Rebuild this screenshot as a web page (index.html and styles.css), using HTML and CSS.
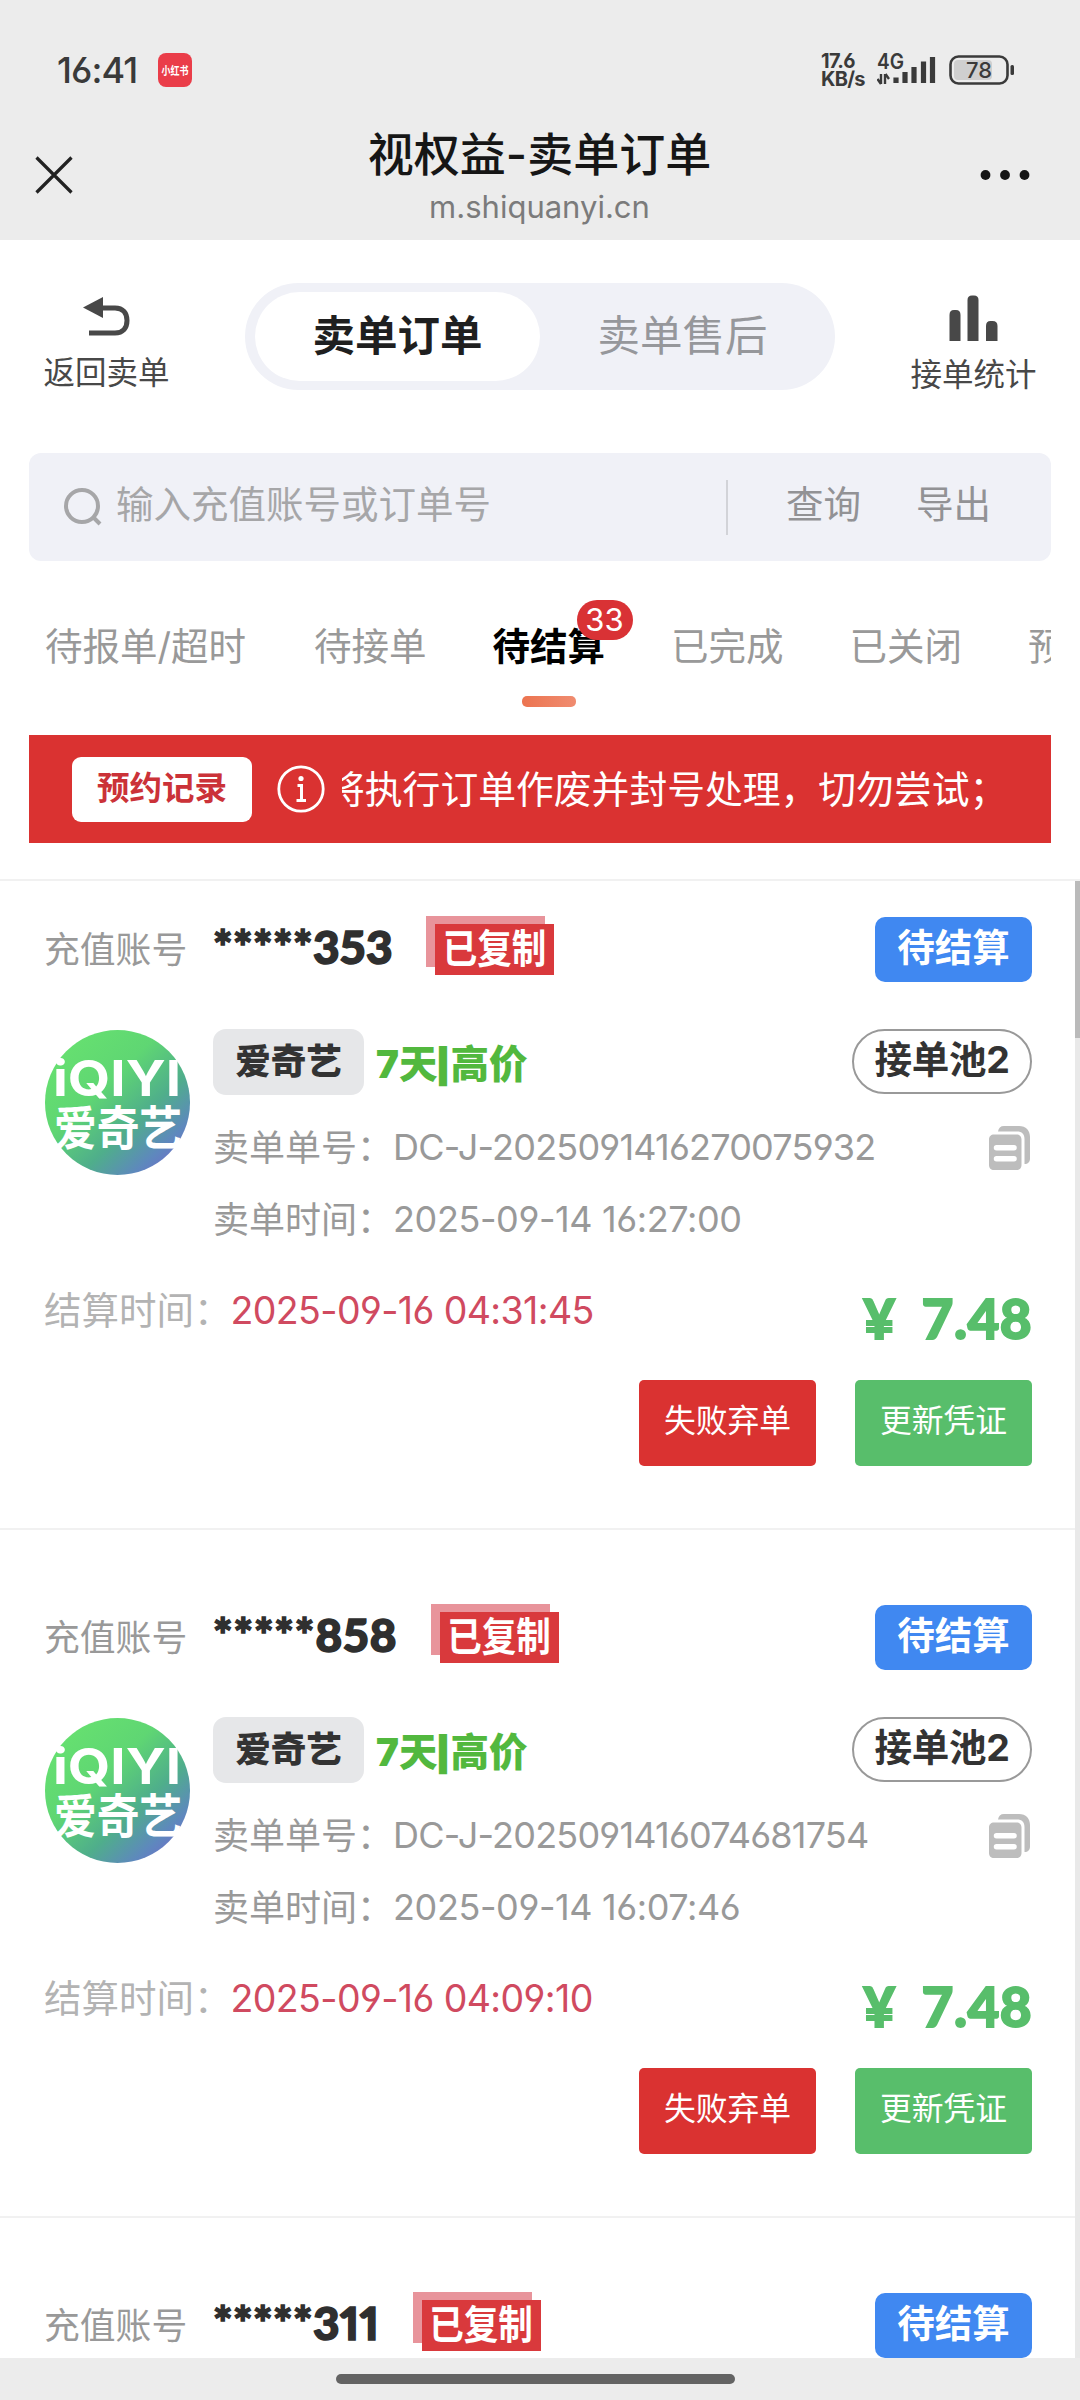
FILE: index.html
```html
<!DOCTYPE html>
<html lang="zh-CN">
<head>
<meta charset="utf-8">
<title>视权益-卖单订单</title>
<link rel="stylesheet" href="styles.css">
</head>
<body>
<svg class="defs" width="0" height="0" aria-hidden="true">
  <defs>
    <linearGradient id="logo-bg" x1="0.15" y1="0.1" x2="0.9" y2="0.9">
      <stop offset="0" stop-color="#66e070"/>
      <stop offset="0.35" stop-color="#5fd673"/>
      <stop offset="0.65" stop-color="#4fae8b"/>
      <stop offset="0.88" stop-color="#5e88bd"/>
      <stop offset="1" stop-color="#6c72c8"/>
    </linearGradient>
    <symbol id="logo" viewBox="0 0 145 145">
      <circle cx="72.5" cy="72.5" r="72.5" fill="url(#logo-bg)"/>
      <text class="logo-en" x="8" y="66" textLength="128" lengthAdjust="spacingAndGlyphs">iQIYI</text>
      <text class="logo-cn" x="9" y="115" textLength="128" lengthAdjust="spacingAndGlyphs">爱奇艺</text>
    </symbol>
    <symbol id="copy" viewBox="0 0 41 44">
      <path d="M9 5.5C9.500 2 11.500 0 15 0H30C37 0 41 4.500 41 11V32.500C41 36 39 38 35.500 38V13C35.500 8 33 5.500 28 5.500Z" fill="#bdbdbd"/>
      <path fill-rule="evenodd" d="M5 8.500H27.500C30.500 8.500 32.500 10.500 32.500 13.500V39C32.500 42 30.500 44 27.500 44H5C2 44 0 42 0 39V13.500C0 10.500 2 8.500 5 8.500ZM7.500 19A2.700 2.700 0 0 0 7.500 24.500H25A2.700 2.700 0 0 0 25 19ZM7.500 30A2.700 2.700 0 0 0 7.500 35.500H25A2.700 2.700 0 0 0 25 30Z" fill="#bdbdbd"/>
    </symbol>
  </defs>
</svg>
<div class="screen">
  <header class="header">
    <div class="status">
      <span class="time">16:41</span>
      <svg class="app-icon" width="34" height="34" viewBox="0 0 34 34"><rect width="34" height="34" rx="8" fill="#ea3d49"/><text transform="translate(3.500 21.500) scale(1 1.300)" textLength="27" lengthAdjust="spacingAndGlyphs">小红书</text></svg>
      <span class="speed"><span>17.6</span><span>KB/s</span></span>
      <svg class="signal" width="60" height="34" viewBox="0 0 60 34">
        <text x="0" y="15.500" textLength="27" lengthAdjust="spacingAndGlyphs">4G</text>
        <path d="M4 21V31M0.500 26L4 31M8 31V21M12 26L8.500 21" fill="none" stroke="#3a3a3a" stroke-width="2.400"/>
        <path d="M19 30V24.500M28 30V19M37 30V14M46.500 30V8.500M55.500 30V4" stroke="#3a3a3a" stroke-width="5.200"/>
      </svg>
      <svg class="battery" width="66" height="30" viewBox="0 0 66 30">
        <rect x="5" y="5" width="38" height="20" rx="4" fill="#cfcfcf"/>
        <rect x="1.500" y="1.500" width="57" height="27" rx="8" fill="none" stroke="#3a3a3a" stroke-width="2.600"/>
        <rect x="61.500" y="10" width="3.500" height="10" rx="1.500" fill="#3a3a3a"/>
        <text x="17" y="23" textLength="26" lengthAdjust="spacingAndGlyphs">78</text>
      </svg>
    </div>
    <div class="nav">
      <svg class="close" width="38" height="38" viewBox="0 0 38 38"><path d="M1.500 1.500L36.500 36.500M36.500 1.500L1.500 36.500" stroke="#222" stroke-width="3.200"/></svg>
      <div class="nav-title"><h1>视权益-卖单订单</h1><p>m.shiquanyi.cn</p></div>
      <svg class="dots" width="50" height="12" viewBox="0 0 50 12" fill="#161616"><circle cx="5.500" cy="6" r="4.900"/><circle cx="25" cy="6" r="4.900"/><circle cx="44.500" cy="6" r="4.900"/></svg>
    </div>
  </header>

  <div class="topbar">
    <div class="action back">
      <svg width="48" height="40" viewBox="0 0 48 40"><path d="M0 10.500L20 0V21Z" fill="#484848"/><path d="M18 11H32C40 11 44 16 44 23.500C44 31 40 36 32 36H6" fill="none" stroke="#484848" stroke-width="5"/></svg>
      <span>返回卖单</span>
    </div>
    <div class="segment">
      <span class="segment-item on">卖单订单</span>
      <span class="segment-item">卖单售后</span>
    </div>
    <div class="action stats">
      <svg width="50" height="46" viewBox="0 0 50 46" fill="#484848"><path d="M0.500 46V20Q0.500 15 5 15H7Q11.500 15 11.500 20V46ZM18.500 46V5Q18.500 0.500 23 0.500H25Q29.500 0.500 29.500 5V46ZM37 46V31Q37 26 41.500 26H43.500Q48.500 26 48.500 31V46Z"/></svg>
      <span>接单统计</span>
    </div>
  </div>

  <div class="search">
    <svg width="38" height="38" viewBox="0 0 38 38" fill="none" stroke="#a6a6a8" stroke-width="4"><circle cx="18" cy="18" r="16"/><path d="M29.500 29.500L36 36"/></svg>
    <span class="placeholder">输入充值账号或订单号</span>
    <i class="divider"></i>
    <span class="link">查询</span>
    <span class="link">导出</span>
  </div>

  <nav class="tabs">
    <span class="tab">待报单/超时</span>
    <span class="tab">待接单</span>
    <span class="tab active">待结算<b class="count">33</b></span>
    <span class="tab">已完成</span>
    <span class="tab">已关闭</span>
    <span class="tab">预</span>
  </nav>

  <div class="notice">
    <span class="notice-btn">预约记录</span>
    <svg width="48" height="50" viewBox="0 0 48 50" fill="none" stroke="#fff"><circle cx="24" cy="25" r="22.200" stroke-width="2.800"/><circle cx="24" cy="14.500" r="2.600" fill="#fff" stroke="none"/><path d="M20.500 21.500H24.500V36.500M19.500 36.500H29" stroke-width="3"/></svg>
    <div class="marquee"><span>将执行订单作废并封号处理，切勿尝试；</span></div>
  </div>

  <main class="list">
    <article class="card first">
      <div class="account">
        <span class="label">充值账号</span><span class="number">*****353</span><span class="copied"><em><span>已复制</span></em></span>
        <span class="state">待结算</span>
      </div>
      <div class="main">
        <svg class="logo" width="145" height="145"><use href="#logo"/></svg>
        <div class="info">
          <div class="product"><span class="brand">爱奇艺</span><span class="plan">7天<i>|</i>高价</span><span class="pool">接单池2</span></div>
          <div class="line"><span class="key">卖单单号：</span><span class="val id">DC-J-2025091416270075932</span><svg class="copy" width="41" height="44"><use href="#copy"/></svg></div>
          <div class="line"><span class="key">卖单时间：</span><span class="val">2025-09-14 16:27:00</span></div>
        </div>
      </div>
      <div class="settle"><span class="settle-label">结算时间：</span><span class="settle-time">2025-09-16 04:31:45</span><span class="price"><span>¥</span>7.48</span></div>
      <div class="buttons"><span class="btn fail">失败弃单</span><span class="btn update">更新凭证</span></div>
    </article>

    <article class="card">
      <div class="account">
        <span class="label">充值账号</span><span class="number wide">*****858</span><span class="copied"><em><span>已复制</span></em></span>
        <span class="state">待结算</span>
      </div>
      <div class="main">
        <svg class="logo" width="145" height="145"><use href="#logo"/></svg>
        <div class="info">
          <div class="product"><span class="brand">爱奇艺</span><span class="plan">7天<i>|</i>高价</span><span class="pool">接单池2</span></div>
          <div class="line"><span class="key">卖单单号：</span><span class="val id">DC-J-2025091416074681754</span><svg class="copy" width="41" height="44"><use href="#copy"/></svg></div>
          <div class="line"><span class="key">卖单时间：</span><span class="val">2025-09-14 16:07:46</span></div>
        </div>
      </div>
      <div class="settle"><span class="settle-label">结算时间：</span><span class="settle-time">2025-09-16 04:09:10</span><span class="price"><span>¥</span>7.48</span></div>
      <div class="buttons"><span class="btn fail">失败弃单</span><span class="btn update">更新凭证</span></div>
    </article>

    <article class="card">
      <div class="account">
        <span class="label">充值账号</span><span class="number">*****311</span><span class="copied"><em><span>已复制</span></em></span>
        <span class="state">待结算</span>
      </div>
    </article>
    <div class="scrollbar"><i></i></div>
  </main>

  <footer class="homebar"><i></i></footer>
</div>
</body>
</html>
```
FILE: styles.css
```css
* { box-sizing: border-box; margin: 0; padding: 0; }
body { background: #fff; }
svg { display: block; flex: none; }
.defs { position: absolute; }

.screen {
  width: 1080px;
  height: 2400px;
  overflow: hidden;
  display: flex;
  flex-direction: column;
  font-family: Inter, "Noto Sans CJK SC", sans-serif;
  font-feature-settings: "cv03", "cv04";
  color: #333;
  white-space: nowrap;
}

/* header */
.header { height: 240px; background: #ececec; flex: none; }
.status { height: 120px; padding: 20px 65px 0 57px; display: flex; align-items: center; color: #3a3a3a; }
.time { font-size: 36px; font-weight: 500; width: 101px; letter-spacing: -0.9px; }
.app-icon text { font-size: 9px; font-weight: 700; fill: #fff; }
.speed { margin-left: auto; width: 56px; display: flex; flex-direction: column; font-size: 20px; line-height: 18px; font-weight: 700; letter-spacing: -0.7px; }
.signal text { font-size: 21px; font-weight: 600; fill: #3a3a3a; }
.battery { margin-left: 12px; }
.battery text { font-size: 22px; font-weight: 500; fill: #3a3a3a; }
.nav { height: 120px; padding: 0 50px 0 35px; display: flex; align-items: center; justify-content: space-between; }
.close { margin-top: -10px; }
.dots { margin-top: -10px; }
.nav-title { text-align: center; margin: -11px 0 0 26px; }
.nav-title h1 { font-size: 46px; line-height: 64px; font-weight: 500; color: #161616; }
.nav-title p { font-size: 31px; line-height: 42px; color: #7b7b7b; }

/* top actions */
.topbar { height: 213px; padding: 43px 43px 0 43px; display: flex; justify-content: space-between; align-items: flex-start; flex: none; }
.action { width: 127px; display: flex; flex-direction: column; align-items: center; font-size: 31.500px; line-height: 36px; color: #484848; }
.back { padding-top: 14px; }
.back span { margin-top: 18px; }
.stats { padding-top: 12px; }
.stats span { margin-top: 16px; }
.segment { width: 590px; height: 107px; border-radius: 54px; background: #f0f1f7; padding: 9px 10px; display: flex; }
.segment-item { flex: 1; border-radius: 45px; text-align: center; font-size: 42.500px; line-height: 87px; color: #96979b; }
.segment-item.on { background: #fff; color: #1f1f1f; font-weight: 700; }

/* search */
.search {
  height: 108px; margin: 0 29px; border-radius: 12px; background: #f0f1f7; flex: none;
  padding: 0 60px 0 35px; display: flex; align-items: center; font-size: 37.500px; line-height: 60px; color: #929295;
}
.placeholder { color: #a6a6a8; margin-left: 14px; flex: 1; padding-bottom: 5px; }
.divider { width: 2px; height: 55px; background: #d2d3d8; }
.link { margin-left: 58px; padding-bottom: 5px; }
.link + .link { margin-left: 55px; }

/* tabs */
.tabs { height: 174px; margin: 0 29px; padding: 48px 0 0 16px; display: flex; gap: 66px; overflow: hidden; flex: none; font-size: 37.500px; line-height: 76px; color: #999; }
.tab { position: relative; flex: none; }
.tab:first-child { margin-right: 2px; }
.tab.active { color: #000; font-weight: 700; }
.tab.active::after {
  content: ""; position: absolute; left: 50%; top: 87px; width: 54px; height: 11px; margin-left: -27px;
  border-radius: 5px; background: linear-gradient(90deg, #ec7450, #f08c70);
}
.count {
  position: absolute; left: 84px; top: -9px; width: 56px; height: 40px; border-radius: 20px;
  background: #d93235; color: #fff; font-size: 31px; line-height: 39px; font-weight: 400; text-align: center;
}

/* notice */
.notice { height: 108px; margin: 0 29px; padding: 0 48px 0 43px; background: #da3231; display: flex; align-items: center; flex: none; color: #fff; }
.notice-btn { width: 180px; height: 65px; border-radius: 9px; background: #fff; color: #cb3238; font-size: 32.500px; font-weight: 700; line-height: 63px; text-align: center; }
.notice svg { margin-left: 25px; }
.marquee { flex: 1; margin-left: 17px; overflow: hidden; font-size: 37.800px; line-height: 60px; }
.marquee span { display: inline-block; margin-left: -15px; }

/* orders */
.list { position: relative; margin-top: 36px; height: 1479px; overflow: hidden; border-top: 2px solid #f1f1f1; flex: none; }
.card { height: 688px; padding: 75px 48px 0 44px; border-bottom: 2px solid #f1f1f1; }
.card.first { height: 649px; padding-top: 36px; }
.account { height: 65px; display: flex; align-items: center; }
.label { font-size: 35.800px; color: #999; width: 169px; margin-top: -6px; }
.number {
  font-family: Lato, sans-serif; font-size: 46px; font-weight: 900; color: #2f2f2f; line-height: 60px; margin-top: -5px;
  font-variant-numeric: proportional-nums; letter-spacing: 0.45px; -webkit-text-stroke: 1.500px #2f2f2f;
}
.number.wide { letter-spacing: 0.9px; }
.copied {
  width: 119px; height: 51px; margin: -17px 0 0 33px; background: #e8949b; position: relative;
}
.copied em {
  position: absolute; left: 9px; top: 8px; width: 119px; height: 51px; background: #d9393c; color: #fff;
  font-style: normal; font-size: 34.500px; font-weight: 700; line-height: 49px; text-align: center;
}
.copied em span { display: block; transform: scaleY(1.14); }
.state { margin-left: auto; width: 157px; height: 65px; border-radius: 10px; background: #4088f1; color: #fff; font-size: 37.500px; font-weight: 700; line-height: 62px; text-align: center; }

.main { margin-top: 47px; display: flex; }
.logo { margin: 1px 0 0 1px; }
.logo-en { font-family: Inter, sans-serif; font-size: 50px; font-weight: 700; fill: #fff; }
.logo-cn { font-family: "Noto Sans CJK SC", sans-serif; font-size: 47px; font-weight: 700; fill: #fff; }
.info { flex: 1; margin-left: 23px; }
.product { height: 66px; display: flex; align-items: center; margin-bottom: 16px; }
.brand { width: 151px; height: 66px; border-radius: 13px; background: #e6e7e9; font-size: 35.500px; line-height: 65px; font-weight: 900; text-align: center; }
.plan { margin: -2px 0 0 12px; font-size: 38.500px; font-weight: 900; color: #52b83e; }
.plan i { display: inline-block; font-style: normal; font-size: 32px; line-height: 32px; width: 13px; text-indent: -1px; -webkit-text-stroke: 2px #52b83e; }
.pool { margin: -2px 0 0 auto; width: 180px; height: 65px; border: 2px solid #999; border-radius: 33px; font-size: 37.500px; line-height: 58px; font-weight: 700; text-align: center; letter-spacing: -0.3px; }
.line { height: 72px; display: flex; align-items: center; font-size: 36px; color: #999; }
.key { margin-top: -4px; }
.val { letter-spacing: -0.4px; }
.val.id { letter-spacing: -0.8px; }
.copy { margin: 2px 2px 0 auto; }

.settle { margin-top: 27px; height: 72px; display: flex; align-items: center; font-size: 37.500px; }
.settle-label { color: #b3b3b3; margin-top: -21px; }
.settle-time { color: #d04a60; margin: -15px 0 0 -1px; letter-spacing: -0.6px; }
.price { margin-left: auto; font-family: Lato, sans-serif; font-weight: 900; font-size: 55px; color: #58be6b; -webkit-text-stroke: 1.800px #58be6b; letter-spacing: 0.4px; }
.price span { margin-right: 26px; }
.buttons { margin-top: 26px; display: flex; justify-content: flex-end; gap: 39px; }
.btn { width: 177px; height: 86px; border-radius: 5px; color: #fff; font-size: 31.800px; line-height: 82px; text-align: center; }
.fail { background: #da3231; }
.update { background: #58be6b; }

.scrollbar { position: absolute; top: 0; right: 0; width: 5px; height: 100%; background: #e9e9e9; }
.scrollbar i { display: block; height: 157px; background: #bababa; }

.homebar { height: 42px; background: #ececec; padding-top: 16px; flex: none; }
.homebar i { display: block; width: 399px; height: 10px; margin-left: 336px; border-radius: 5px; background: #636363; }
```
